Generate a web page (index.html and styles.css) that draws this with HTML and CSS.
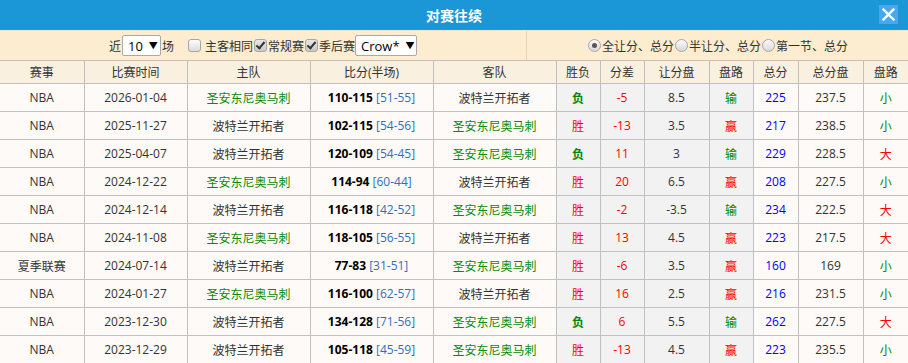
FILE: index.html
```html
<!DOCTYPE html>
<html lang="zh-CN">
<head>
  <meta charset="UTF-8">
  <title>对赛往续</title>
  <link rel="stylesheet" href="styles.css">
</head>
<body>
  <div class="panel">
    <header class="title-bar">
      <h1>对赛往续</h1>
      <span class="close-btn">
        <svg width="13" height="13" viewBox="0 0 13 13"><path d="M1.5 1.5 L11.5 11.5 M11.5 1.5 L1.5 11.5" stroke="#fff" stroke-width="2.4" stroke-linecap="square"/></svg>
      </span>
    </header>

    <div class="filter-bar">
      <div class="filter-left">
        <span>近</span>
        <span class="fake-select sel-num">10 <i>▼</i></span>
        <span>场</span>
        <span class="check gap-left"></span>
        <span class="lbl">主客相同</span>
        <span class="check on"></span>
        <span>常规赛</span>
        <span class="check on"></span>
        <span>季后赛</span>
        <span class="fake-select sel-comp">Crow* <i>▼</i></span>
      </div>
      <div class="filter-right">
        <span class="radio on"></span><span>全让分、总分</span>
        <span class="radio"></span><span>半让分、总分</span>
        <span class="radio"></span><span>第一节、总分</span>
      </div>
    </div>

    <table class="history">
      <colgroup>
        <col style="width:84px"><col style="width:103px"><col style="width:123px"><col style="width:123px"><col style="width:123px">
        <col style="width:44px"><col style="width:44px"><col style="width:65px"><col style="width:44px"><col style="width:45px"><col style="width:65px"><col>
      </colgroup>
      <thead>
        <tr>
          <th>赛事</th><th>比赛时间</th><th>主队</th><th>比分(半场)</th><th>客队</th>
          <th>胜负</th><th>分差</th><th>让分盘</th><th>盘路</th><th>总分</th><th>总分盘</th><th>盘路</th>
        </tr>
      </thead>
      <tbody>
        <tr><td>NBA</td><td>2026-01-04</td><td class="spurs">圣安东尼奥马刺</td><td><b>110-115</b> <span class="half">[51-55]</span></td><td>波特兰开拓者</td><td class="g lose">负</td><td class="g red">-5</td><td class="g">8.5</td><td class="g lose">输</td><td class="total">225</td><td>237.5</td><td class="lose">小</td></tr>
        <tr><td>NBA</td><td>2025-11-27</td><td>波特兰开拓者</td><td><b>102-115</b> <span class="half">[54-56]</span></td><td class="spurs">圣安东尼奥马刺</td><td class="g red">胜</td><td class="g red">-13</td><td class="g">3.5</td><td class="g red">赢</td><td class="total">217</td><td>238.5</td><td class="lose">小</td></tr>
        <tr><td>NBA</td><td>2025-04-07</td><td>波特兰开拓者</td><td><b>120-109</b> <span class="half">[54-45]</span></td><td class="spurs">圣安东尼奥马刺</td><td class="g lose">负</td><td class="g red">11</td><td class="g">3</td><td class="g lose">输</td><td class="total">229</td><td>228.5</td><td class="red">大</td></tr>
        <tr><td>NBA</td><td>2024-12-22</td><td class="spurs">圣安东尼奥马刺</td><td><b>114-94</b> <span class="half">[60-44]</span></td><td>波特兰开拓者</td><td class="g red">胜</td><td class="g red">20</td><td class="g">6.5</td><td class="g red">赢</td><td class="total">208</td><td>227.5</td><td class="lose">小</td></tr>
        <tr><td>NBA</td><td>2024-12-14</td><td>波特兰开拓者</td><td><b>116-118</b> <span class="half">[42-52]</span></td><td class="spurs">圣安东尼奥马刺</td><td class="g red">胜</td><td class="g red">-2</td><td class="g">-3.5</td><td class="g lose">输</td><td class="total">234</td><td>222.5</td><td class="red">大</td></tr>
        <tr><td>NBA</td><td>2024-11-08</td><td class="spurs">圣安东尼奥马刺</td><td><b>118-105</b> <span class="half">[56-55]</span></td><td>波特兰开拓者</td><td class="g red">胜</td><td class="g red">13</td><td class="g">4.5</td><td class="g red">赢</td><td class="total">223</td><td>217.5</td><td class="red">大</td></tr>
        <tr><td>夏季联赛</td><td>2024-07-14</td><td>波特兰开拓者</td><td><b>77-83</b> <span class="half">[31-51]</span></td><td class="spurs">圣安东尼奥马刺</td><td class="g red">胜</td><td class="g red">-6</td><td class="g">3.5</td><td class="g red">赢</td><td class="total">160</td><td>169</td><td class="lose">小</td></tr>
        <tr><td>NBA</td><td>2024-01-27</td><td class="spurs">圣安东尼奥马刺</td><td><b>116-100</b> <span class="half">[62-57]</span></td><td>波特兰开拓者</td><td class="g red">胜</td><td class="g red">16</td><td class="g">2.5</td><td class="g red">赢</td><td class="total">216</td><td>231.5</td><td class="lose">小</td></tr>
        <tr><td>NBA</td><td>2023-12-30</td><td>波特兰开拓者</td><td><b>134-128</b> <span class="half">[71-56]</span></td><td class="spurs">圣安东尼奥马刺</td><td class="g lose">负</td><td class="g red">6</td><td class="g">5.5</td><td class="g lose">输</td><td class="total">262</td><td>227.5</td><td class="red">大</td></tr>
        <tr><td>NBA</td><td>2023-12-29</td><td>波特兰开拓者</td><td><b>105-118</b> <span class="half">[45-59]</span></td><td class="spurs">圣安东尼奥马刺</td><td class="g red">胜</td><td class="g red">-13</td><td class="g">4.5</td><td class="g red">赢</td><td class="total">223</td><td>235.5</td><td class="lose">小</td></tr>
      </tbody>
    </table>
  </div>
</body>
</html>
```

FILE: styles.css
```css
body {
  margin: 0;
  font-family: 'Open Sans', 'Noto Sans CJK SC', sans-serif;
  font-size: 12px;
  color: #333;
  background: #fff;
}

.panel {
  width: 908px;
  overflow: hidden;
}

.title-bar {
  height: 30px;
  background: #1b96d6;
  display: flex;
  align-items: center;
  justify-content: center;
  position: relative;
}

.title-bar h1 {
  margin: 0;
  color: #fff;
  font-size: 14px;
  font-weight: bold;
  font-family: 'Noto Sans CJK SC', sans-serif;
}

.close-btn {
  position: absolute;
  right: 10px;
  top: 5px;
  width: 19px;
  height: 19px;
  background: #4ca6ea;
  display: flex;
  align-items: center;
  justify-content: center;
}

.filter-bar {
  display: flex;
  height: 31px;
  background: #fcedd0;
  border-top: 1px solid #f8e4bd;
  border-bottom: 1px solid #c8c0b4;
  box-sizing: border-box;
}

.filter-left,
.filter-right {
  display: flex;
  align-items: center;
  justify-content: center;
  white-space: nowrap;
}

.filter-left {
  width: 526px;
  border-right: 1px solid #e9d4ad;
}

.filter-right {
  flex: 1;
}

.fake-select {
  display: inline-flex;
  align-items: center;
  height: 21px;
  box-sizing: border-box;
  background: #fff;
  border: 1px solid #a9a9a9;
  border-radius: 2px;
  color: #000;
  font-size: 13px;
  padding: 0 4px 0 5px;
}

.fake-select i {
  font-style: normal;
  font-size: 9px;
  margin-left: 6px;
}

.sel-num {
  width: 39px;
  margin: 0 1px;
}

.sel-comp {
  width: 62px;
  margin-left: 0;
}

.check {
  display: inline-block;
  width: 11px;
  height: 11px;
  border: 1px solid #a7a7a7;
  border-radius: 3px;
  background: linear-gradient(#fcfcfc, #dcdcdc);
  margin: 0 1px 0 1px;
  position: relative;
}

.check.gap-left {
  margin-left: 14px;
  margin-right: 4px;
}

.check.on {
  background: linear-gradient(#e8e8e8, #c8c8c8);
}

.check.on::after {
  content: "";
  position: absolute;
  left: 3px;
  top: 0;
  width: 3px;
  height: 7px;
  border: solid #333;
  border-width: 0 2px 2px 0;
  transform: rotate(40deg);
}

.radio {
  display: inline-block;
  width: 11px;
  height: 11px;
  border: 1px solid #a7a7a7;
  border-radius: 50%;
  background: linear-gradient(#fbfbfb, #d8d8d8);
  margin: 0 1px 0 1px;
  position: relative;
}

.radio.on::after {
  content: "";
  position: absolute;
  left: 3px;
  top: 3px;
  width: 5px;
  height: 5px;
  border-radius: 50%;
  background: #555;
}

.history {
  width: 908px;
  border-collapse: collapse;
  table-layout: fixed;
}

.history th,
.history td {
  border: 1px solid #c0c0c0;
  text-align: center;
  padding: 0;
  white-space: nowrap;
}

.history tr > :first-child {
  border-left: none;
}

.history tr > :last-child {
  border-right: none;
}

.history th {
  height: 22px;
  background: #faf0df;
  font-weight: normal;
  color: #333;
  border-top: none;
}

.history td {
  height: 27px;
  background: #fdfaf7;
}

.history td.g {
  background: #f3f2f2;
}

.history b {
  color: #000;
}

.half {
  color: #2f6fc4;
}

.spurs {
  color: #0a8a0a;
}

.red {
  color: #f00;
}

.lose {
  color: #080;
  font-weight: bold;
}

td.lose:last-child,
td.lose:nth-child(9) {
  font-weight: normal;
}

.total {
  color: #00f;
}
```
